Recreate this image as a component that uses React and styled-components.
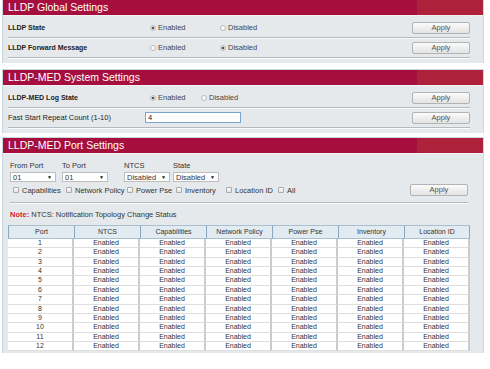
import React from 'react';
import styled, { createGlobalStyle } from 'styled-components';

const GlobalStyle = createGlobalStyle`
  body {
    margin: 0;
    background: #fff;
    font-family: "Liberation Sans", Arial, sans-serif;
    color: #333;
  }
`;

const Page = styled.div`
  padding-left: 2px;
  display: flex;
  flex-direction: column;
`;

const Panel = styled.section`
  width: 480px;
  margin-top: ${p => p.$gap || 0}px;
  background: #e6e9ec;
  border-left: 1px solid #c9d7e1;
  border-right: 1px solid #c9d7e1;
  border-top: ${p => (p.$first ? 'none' : '1px solid #c9d7e1')};
`;

const Header = styled.h2`
  margin: 0;
  height: 15px;
  line-height: 15px;
  padding-left: 5px;
  font-size: 10.5px;
  font-weight: normal;
  color: #fff;
  background: linear-gradient(90deg, #a60f3d 414px, #ae213b 414px);
  border-bottom: 1px solid #f0f2f4;
`;

const Body = styled.div`
  padding: ${p => p.$pad};
`;

const Row = styled.div`
  display: flex;
  align-items: center;
  height: 19px;
  border-bottom: 1px solid #b7babd;
  box-shadow: 0 1px 0 #fafafa;
`;

const Label = styled.div`
  width: ${p => p.$w || 142}px;
  font-size: ${p => (p.$bold ? 7 : 7.5)}px;
  font-weight: ${p => (p.$bold ? 'bold' : 'normal')};
  color: #222;
`;

const Option = styled.label`
  display: inline-flex;
  align-items: center;
  width: ${p => (p.$w ? `${p.$w}px` : 'auto')};
  font-size: 7.5px;
  color: #444;
`;

const Radio = styled.span`
  width: 6px;
  height: 6px;
  box-sizing: border-box;
  margin-right: 2px;
  border-radius: 50%;
  border: 1px solid #bcbcbc;
  background: ${p =>
    p.$on
      ? 'radial-gradient(circle, #555 0 1.1px, #d8d8d8 1.6px, #f6f6f6 3px)'
      : 'radial-gradient(circle, #fff 0 1px, #ececec 3px)'};
`;

const Button = styled.button`
  margin-left: auto;
  width: 58px;
  height: 12px;
  padding: 0;
  border: 1px solid #b3b3b3;
  border-radius: 2px;
  background: linear-gradient(#fbfbfb, #e3e3e3);
  font: 7.5px "Liberation Sans", Arial, sans-serif;
  line-height: 10px;
  color: #555;
`;

const TextInput = styled.input`
  width: 96px;
  height: 11px;
  box-sizing: border-box;
  padding: 0 2px;
  border: 1px solid #7ba4cf;
  background: #fff;
  font: 7.5px "Liberation Sans", Arial, sans-serif;
  color: #222;
  outline: none;
`;

const FieldRow = styled.div`
  display: flex;
`;

const Field = styled.div`
  width: ${p => p.$w}px;
  display: flex;
  flex-direction: column;
  gap: 2px;
  font-size: 7.5px;
  line-height: 9px;
  color: #333;
`;

const Select = styled.div`
  width: 46px;
  height: 10px;
  box-sizing: border-box;
  display: flex;
  align-items: center;
  justify-content: space-between;
  padding: 0 3px 0 2px;
  border: 1px solid #bdbdbd;
  background: #fff;
  font-size: 7.5px;
  color: #333;
`;

const Caret = styled.span`
  font-size: 5px;
  color: #111;
`;

const CheckRow = styled.div`
  display: flex;
  align-items: center;
  height: 12px;
  margin-top: 2px;
  padding-left: 3px;
`;

const CheckItem = styled.label`
  display: inline-flex;
  align-items: center;
  width: ${p => (p.$w ? `${p.$w}px` : 'auto')};
  font-size: 7.5px;
  color: #333;
`;

const Checkbox = styled.span`
  width: 6px;
  height: 6px;
  box-sizing: border-box;
  margin-right: 3px;
  border: 1px solid #aaa;
  border-radius: 1px;
  background: linear-gradient(#fff, #e2e2e2);
`;

const Separator = styled.hr`
  margin: 6px 0 0;
  height: 0;
  border: 0;
  border-top: 1px solid #b7babd;
  box-shadow: 0 1px 0 #fafafa;
`;

const Note = styled.p`
  margin: 7px 0 0;
  font-size: 7.5px;
  line-height: 9px;
  color: #333;
`;

const NoteTag = styled.b`
  color: #e2182b;
`;

const TableWrap = styled.div`
  margin: 6px -2px 0;
  padding-bottom: 2px;
`;

const Table = styled.table`
  width: 462px;
  table-layout: fixed;
  border-collapse: separate;
  border-spacing: 0;
  font-size: 7px;
  color: #333;
`;

const Th = styled.th`
  padding: 0;
  line-height: 12px;
  font-weight: normal;
  background: #e2ebf1;
  border-top: 1px solid #a9c1cf;
  border-bottom: 1px solid #a9c1cf;
  border-left: 1px solid #86abbf;
  &:last-child {
    border-right: 1px solid #86abbf;
  }
`;

const Td = styled.td`
  padding: 0;
  text-align: center;
  line-height: 8.36px;
  background: #fff;
  border-bottom: 1px solid #dedede;
  border-right: 2px solid #cbcbcb;
`;

const columns = ['Port', 'NTCS', 'Capabilities', 'Network Policy', 'Power Pse', 'Inventory', 'Location ID'];
const ports = Array.from({ length: 12 }, (_, i) => i + 1);

const RadioPair = ({ on, firstWidth }) => (
  <>
    <Option $w={firstWidth}>
      <Radio $on={on === 'enabled'} />
      Enabled
    </Option>
    <Option>
      <Radio $on={on === 'disabled'} />
      Disabled
    </Option>
  </>
);

const App = () => {
  return (
    <>
      <GlobalStyle />
      <Page>
        <Panel $first>
          <Header>LLDP Global Settings</Header>
          <Body $pad="2px 13px 5px 5px">
            <Row>
              <Label $bold>LLDP State</Label>
              <RadioPair on="enabled" firstWidth={70} />
              <Button>Apply</Button>
            </Row>
            <Row>
              <Label $bold>LLDP Forward Message</Label>
              <RadioPair on="disabled" firstWidth={70} />
              <Button>Apply</Button>
            </Row>
          </Body>
        </Panel>

        <Panel $gap={6}>
          <Header>LLDP-MED System Settings</Header>
          <Body $pad="2px 13px 5px 5px">
            <Row>
              <Label $bold>LLDP-MED Log State</Label>
              <RadioPair on="enabled" firstWidth={51} />
              <Button>Apply</Button>
            </Row>
            <Row>
              <Label $w={137}>Fast Start Repeat Count (1-10)</Label>
              <TextInput defaultValue="4" />
              <Button>Apply</Button>
            </Row>
          </Body>
        </Panel>

        <Panel $gap={4}>
          <Header>LLDP-MED Port Settings</Header>
          <Body $pad="7px 15px 0 7px">
            <FieldRow>
              <Field $w={52}>
                From Port
                <Select>01<Caret>▼</Caret></Select>
              </Field>
              <Field $w={62}>
                To Port
                <Select>01<Caret>▼</Caret></Select>
              </Field>
              <Field $w={49}>
                NTCS
                <Select>Disabled<Caret>▼</Caret></Select>
              </Field>
              <Field $w={50}>
                State
                <Select>Disabled<Caret>▼</Caret></Select>
              </Field>
            </FieldRow>
            <CheckRow>
              <CheckItem $w={53}><Checkbox />Capabilities</CheckItem>
              <CheckItem $w={61}><Checkbox />Network Policy</CheckItem>
              <CheckItem $w={49}><Checkbox />Power Pse</CheckItem>
              <CheckItem $w={50}><Checkbox />Inventory</CheckItem>
              <CheckItem $w={52}><Checkbox />Location ID</CheckItem>
              <CheckItem><Checkbox />All</CheckItem>
              <Button>Apply</Button>
            </CheckRow>
            <Separator />
            <Note>
              <NoteTag>Note:</NoteTag> NTCS: Notification Topology Change Status
            </Note>
            <TableWrap>
              <Table>
                <thead>
                  <tr>
                    {columns.map(c => (
                      <Th key={c}>{c}</Th>
                    ))}
                  </tr>
                </thead>
                <tbody>
                  {ports.map(p => (
                    <tr key={p}>
                      <Td>{p}</Td>
                      {columns.slice(1).map(c => (
                        <Td key={c}>Enabled</Td>
                      ))}
                    </tr>
                  ))}
                </tbody>
              </Table>
            </TableWrap>
          </Body>
        </Panel>
      </Page>
    </>
  );
};

export default App;
